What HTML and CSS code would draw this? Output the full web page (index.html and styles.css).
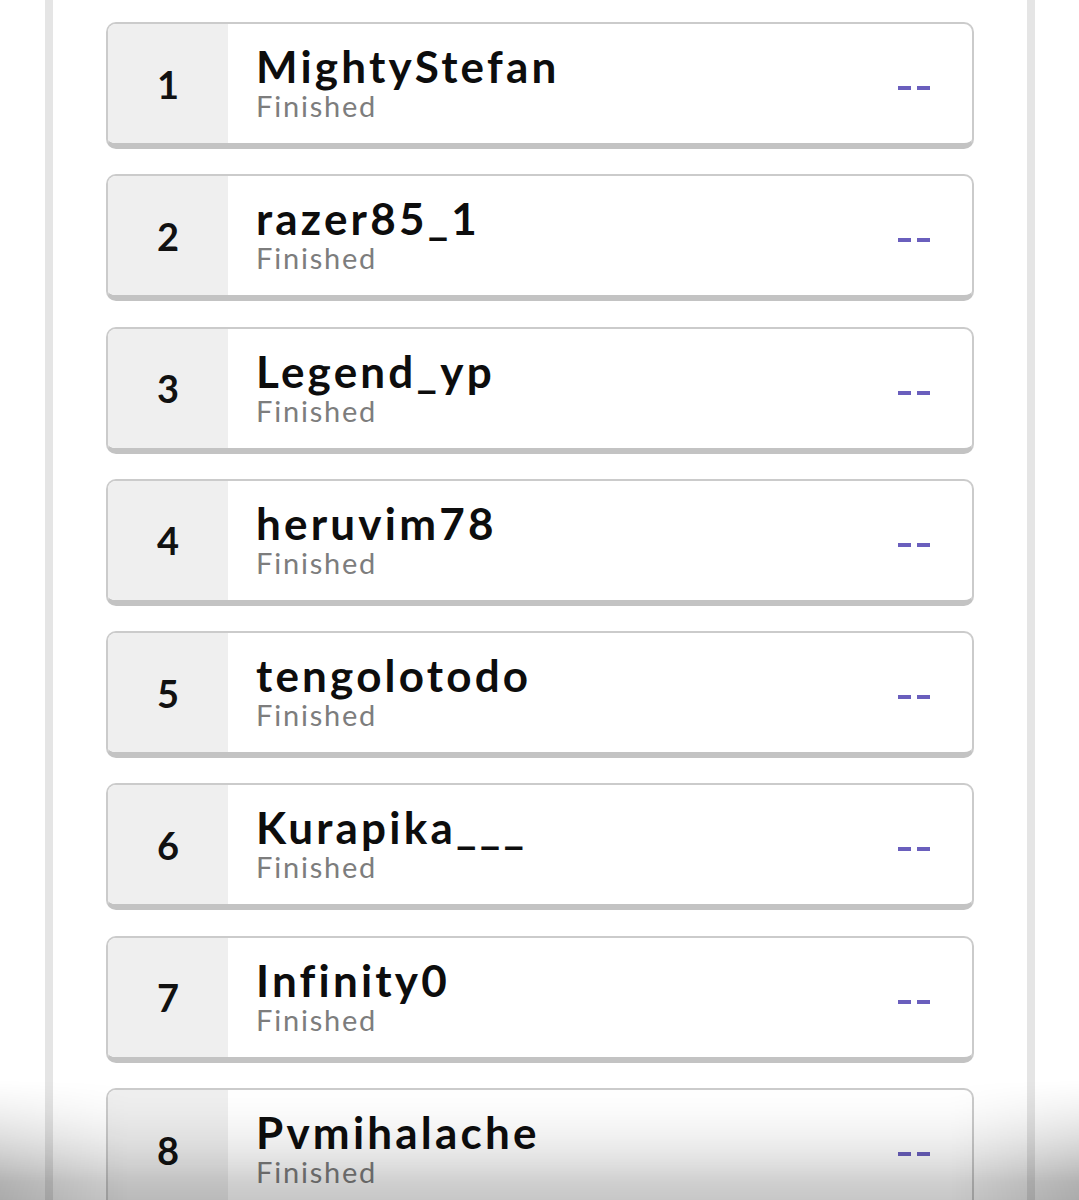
FILE: index.html
```html
<!DOCTYPE html>
<html lang="en">
<head>
<meta charset="utf-8">
<title>Leaderboard</title>
<link rel="stylesheet" href="styles.css">
</head>
<body>
<div class="frame">
  <ul class="list">
    <li class="card"><div class="rank">1</div><div class="info"><div class="name">MightyStefan</div><div class="status">Finished</div></div><div class="score"><span></span><span></span></div></li>
    <li class="card"><div class="rank">2</div><div class="info"><div class="name">razer85_1</div><div class="status">Finished</div></div><div class="score"><span></span><span></span></div></li>
    <li class="card"><div class="rank">3</div><div class="info"><div class="name">Legend_yp</div><div class="status">Finished</div></div><div class="score"><span></span><span></span></div></li>
    <li class="card"><div class="rank">4</div><div class="info"><div class="name">heruvim78</div><div class="status">Finished</div></div><div class="score"><span></span><span></span></div></li>
    <li class="card"><div class="rank">5</div><div class="info"><div class="name">tengolotodo</div><div class="status">Finished</div></div><div class="score"><span></span><span></span></div></li>
    <li class="card"><div class="rank">6</div><div class="info"><div class="name">Kurapika___</div><div class="status">Finished</div></div><div class="score"><span></span><span></span></div></li>
    <li class="card"><div class="rank">7</div><div class="info"><div class="name">Infinity0</div><div class="status">Finished</div></div><div class="score"><span></span><span></span></div></li>
    <li class="card"><div class="rank">8</div><div class="info"><div class="name">Pvmihalache</div><div class="status">Finished</div></div><div class="score"><span></span><span></span></div></li>
  </ul>
</div>
<div class="fade"></div>
</body>
</html>
```

FILE: styles.css
```css
html, body {
  margin: 0;
  padding: 0;
  background: #ffffff;
  height: 1200px;
  overflow: hidden;
}
body {
  font-family: Lato, "Noto Sans", sans-serif;
  color: #111;
}
.frame {
  margin-left: 45px;
  width: 990px;
  min-height: 1200px;
  box-sizing: border-box;
  border-left: 8px solid #e5e5e5;
  border-right: 8px solid #e5e5e5;
  padding: 22px 53px 0;
}
.list {
  list-style: none;
  margin: 0;
  padding: 0;
  display: flex;
  flex-direction: column;
  gap: 25.3px;
}
.card {
  display: flex;
  align-items: stretch;
  height: 127px;
  box-sizing: border-box;
  border: 2px solid #cbcbcb;
  border-bottom: 6px solid #c3c3c3;
  border-radius: 10px;
  background: #fff;
  overflow: hidden;
}
.rank {
  width: 120px;
  flex: none;
  background: #efefef;
  display: flex;
  align-items: center;
  justify-content: center;
  font-size: 38px;
  font-weight: 700;
  color: #111;
}
.info {
  flex: 1;
  display: flex;
  flex-direction: column;
  justify-content: center;
  padding-left: 28px;
  padding-top: 1px;
}
.name {
  font-size: 44px;
  line-height: 44px;
  font-weight: 700;
  letter-spacing: 3.2px;
  color: #0d0d0d;
}
.status {
  font-size: 29px;
  line-height: 36px;
  letter-spacing: 1.8px;
  color: #7d7d7d;
}
.score {
  flex: none;
  display: flex;
  align-items: center;
  gap: 6px;
  padding-right: 42px;
  padding-top: 9px;
}
.score span {
  display: block;
  width: 13px;
  height: 4px;
  background: #6a5fbd;
}
.fade {
  position: fixed;
  left: 0;
  right: 0;
  bottom: 0;
  height: 120px;
  pointer-events: none;
  background:
    linear-gradient(to right, rgba(0,0,0,0.14), rgba(0,0,0,0) 12%, rgba(0,0,0,0) 88%, rgba(0,0,0,0.14)),
    linear-gradient(to bottom, rgba(0,0,0,0), rgba(0,0,0,0.22));
  -webkit-mask-image: linear-gradient(to bottom, transparent, #000 85%);
  mask-image: linear-gradient(to bottom, transparent, #000 85%);
}
```
